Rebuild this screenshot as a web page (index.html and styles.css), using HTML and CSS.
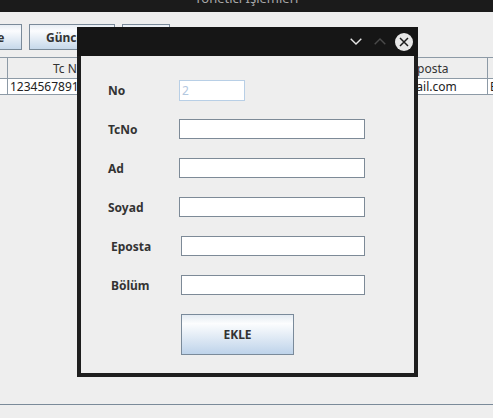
FILE: index.html
```html
<!DOCTYPE html>
<html lang="tr">
<head>
<meta charset="utf-8">
<title>Yönetici İşlemleri</title>
<link rel="stylesheet" href="styles.css">
</head>
<body>
<div class="app">
  <div class="titlebar"><span class="title">Yönetici İşlemleri</span></div>
  <div class="toolbar">
    <button class="sbtn b1">Ekle</button>
    <button class="sbtn b2">Güncelle</button>
    <button class="sbtn b3">Sil</button>
  </div>
  <table class="grid">
    <colgroup>
      <col class="c0"><col class="c1"><col class="c2"><col class="c3"><col class="c4"><col class="c5">
    </colgroup>
    <thead>
      <tr><th>No</th><th>Tc No</th><th>Ad</th><th>Soyad</th><th>Eposta</th><th>Bölüm</th></tr>
    </thead>
    <tbody>
      <tr><td>1</td><td>12345678912</td><td>Ali</td><td>Yılmaz</td><td>ali@gmail.com</td><td>Bilgisayar</td></tr>
    </tbody>
  </table>
  <div class="fill"></div>
  <div class="footer"></div>
</div>

<div class="dialog">
  <div class="dlg-bar">
    <svg class="ic-down" width="12" height="7" viewBox="0 0 12 7"><path d="M0.7 0.7 L6 6 L11.3 0.7" fill="none" stroke="#e6e6e6" stroke-width="1.4"/></svg>
    <svg class="ic-up" width="12" height="7" viewBox="0 0 12 7"><path d="M0.7 6.3 L6 1 L11.3 6.3" fill="none" stroke="#4a4a4a" stroke-width="1.4"/></svg>
    <svg class="ic-close" width="18" height="18" viewBox="0 0 18 18"><circle cx="9" cy="9" r="9" fill="#e8e8e8"/><path d="M5 5 L13 13 M13 5 L5 13" stroke="#1c1c1c" stroke-width="1.5" fill="none"/></svg>
  </div>
  <div class="dlg-body">
    <div class="row"><label class="lbl">No</label><input class="fld short" value="2" disabled></div>
    <div class="row"><label class="lbl">TcNo</label><input class="fld"></div>
    <div class="row"><label class="lbl">Ad</label><input class="fld"></div>
    <div class="row"><label class="lbl">Soyad</label><input class="fld"></div>
    <div class="row shift"><label class="lbl">Eposta</label><input class="fld"></div>
    <div class="row shift"><label class="lbl">Bölüm</label><input class="fld"></div>
    <div class="row btnrow"><button class="ekle">EKLE</button></div>
  </div>
</div>
</body>
</html>
```
FILE: styles.css
```css
html, body {
  margin: 0;
  padding: 0;
  background: #eeeeee;
  font-family: "Noto Sans", "Open Sans", sans-serif;
  color: #333;
  overflow: hidden;
}
.app {
  height: 418px;
  display: flex;
  flex-direction: column;
}
.titlebar {
  height: 12px;
  background: #1b1b1b;
  overflow: hidden;
  display: flex;
  justify-content: center;
}
.title {
  font-size: 13px;
  line-height: 13px;
  margin-top: -8px;
  margin-left: 0;
  color: #a8a8a8;
}
.toolbar {
  display: flex;
  gap: 7px;
  margin-top: 12px;
  margin-left: -38px;
  height: 26px;
}
.sbtn {
  height: 26px;
  border: 1px solid #7a8a99;
  background: linear-gradient(to bottom, #e8eef4 0%, #fbfcfe 25%, #c6d8ea 100%);
  font-family: "Noto Sans", sans-serif;
  font-weight: bold;
  font-size: 12px;
  color: #333;
  padding: 0;
}
.b1 { width: 60px; }
.b2 { width: 86px; }
.b3 { width: 48px; }

.grid {
  margin-top: 7px;
  margin-left: -60px;
  border-collapse: collapse;
  table-layout: fixed;
  width: 670px;
  font-size: 12px;
}
.c0 { width: 67px; }
.c1 { width: 122px; }
.c2 { width: 121px; }
.c3 { width: 121px; }
.c4 { width: 116px; }
.c5 { width: 123px; }
.grid th {
  height: 20px;
  padding: 0;
  font-weight: normal;
  color: #333;
  border: 1px solid #8d9aa6;
  background: #eeeeee;
  text-align: center;
  white-space: nowrap;
  overflow: hidden;
}
.grid td {
  height: 15px;
  padding: 0 0 0 2px;
  line-height: 15px;
  background: #ffffff;
  border: 1px solid #8d9aa6;
  color: #222;
  text-align: left;
  white-space: nowrap;
  overflow: hidden;
}
.fill { flex: 1; }
.footer {
  height: 13px;
  border-top: 1px solid #7a8a99;
  background: #eeeeee;
}

/* dialog window */
.dialog {
  position: absolute;
  left: 77px;
  top: 27px;
  width: 341px;
  height: 350px;
  background: #1e1e1e;
  display: flex;
  flex-direction: column;
}
.dlg-bar {
  height: 29px;
  background: #161616;
  display: flex;
  align-items: center;
  justify-content: flex-end;
  padding-right: 5px;
}
.ic-up { margin-left: 12px; }
.ic-close { margin-left: 9px; }
.dlg-body {
  flex: 1;
  margin: 0 4px 4px 4px;
  background: #eeeeee;
  padding: 24px 0 0 27px;
  display: flex;
  flex-direction: column;
  gap: 19px;
}
.row {
  display: flex;
  align-items: center;
  height: 20px;
}
.lbl {
  width: 71px;
  font-weight: bold;
  font-size: 12px;
  color: #333;
}
.fld {
  box-sizing: border-box;
  width: 186px;
  height: 20px;
  border: 1px solid #7d8a97;
  background: #fff;
  margin: 0;
  padding: 0 2px;
  font-family: "Noto Sans", sans-serif;
  font-size: 12px;
  outline: none;
}
.fld.short {
  width: 66px;
  height: 21px;
  border: 1px solid #b8cfe6;
  color: #b3c8df;
  background: #fff;
}
.shift .lbl { padding-left: 3px; width: 70px; }
.shift .fld { width: 184px; }
.btnrow {
  height: 41px;
  padding-left: 73px;
}
.ekle {
  width: 113px;
  height: 41px;
  border: 1px solid #7a8a9a;
  background: linear-gradient(to bottom, #e4ebf2 0%, #fcfdfe 22%, #bed3ea 100%);
  font-family: "Noto Sans", sans-serif;
  font-weight: bold;
  font-size: 12px;
  color: #333;
  padding: 0;
}
```
